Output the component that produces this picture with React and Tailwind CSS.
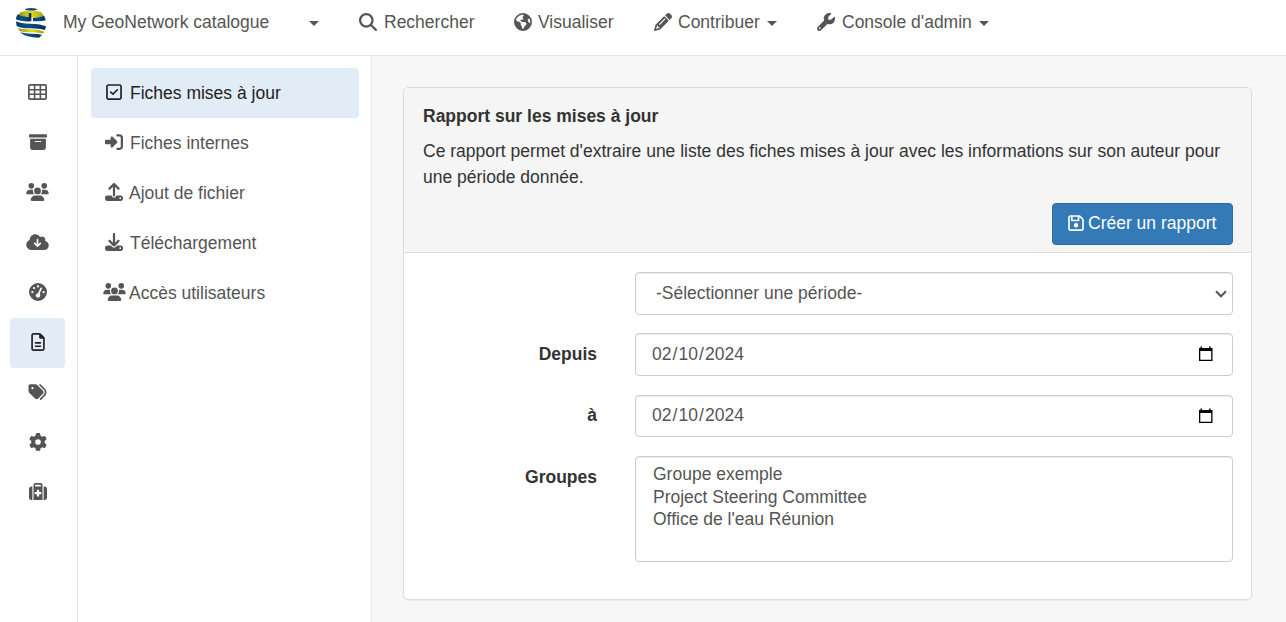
import React from "react";
import {
  FaMagnifyingGlass, FaEarthAmericas, FaPencil, FaWrench, FaBoxArchive, FaUsers,
  FaCloudArrowDown, FaGaugeHigh, FaRegFileLines, FaTags, FaGear, FaSuitcaseMedical,
  FaRegSquareCheck, FaRightToBracket, FaUpload, FaDownload, FaRegFloppyDisk,
} from "react-icons/fa6";

function Logo() {
  return (
    <svg className="h-[32px] w-[32px]" viewBox="3 3 96 96">
      <defs>
        <linearGradient id="navy" x1="0" x2="1">
          <stop offset="0" stopColor="#0a3566" />
          <stop offset="0.4" stopColor="#0b5288" />
          <stop offset="1" stopColor="#0a2c58" />
        </linearGradient>
        <linearGradient id="gold" x1="0" x2="1">
          <stop offset="0" stopColor="#8f951c" />
          <stop offset="0.5" stopColor="#e6dc1e" />
          <stop offset="1" stopColor="#a3a11b" />
        </linearGradient>
      </defs>
      <ellipse cx="51" cy="10" rx="18" ry="4" fill="url(#navy)" />
      <path d="M21 18Q50 11 81 18l9 12Q76 35 58 35H44Q26 34 13 26z" fill="url(#gold)" />
      <path d="M11 25Q24 33 44 34V21h8V46Q22 48 6 40Q7 31 11 25z" fill="url(#navy)" />
      <path d="M57 36Q76 35 90 29q4 6 5 14-14 4-38 2z" fill="url(#navy)" />
      <path d="M6 46Q20 53 48 53q34 1 48 8l-3 11Q76 67 48 67 20 67 8 60z" fill="url(#navy)" />
      <path d="M12 67Q28 70 50 70q28 0 41 8l-5 5Q70 79 50 79 26 79 17 75z" fill="url(#gold)" />
      <path d="M18 79Q32 83 52 83q22 0 32 4l-9 8Q36 95 18 79z" fill="url(#navy)" />
    </svg>
  );
}

function TableIcon({ className }) {
  return (
    <svg className={className} viewBox="0 0 19 16" fill="currentColor">
      <path
        fillRule="evenodd"
        d="M2 0h15a2 2 0 0 1 2 2v12a2 2 0 0 1-2 2H2a2 2 0 0 1-2-2V2a2 2 0 0 1 2-2z
          M1.700 1.700v3.200h4.100V1.700z M7.400 1.700v3.200h4.200V1.700z M13.200 1.700v3.200h4.100V1.700z
          M1.700 6.400v3.200h4.100V6.400z M7.400 6.400v3.200h4.200V6.400z M13.200 6.400v3.200h4.100V6.400z
          M1.700 11.100v3.200h4.100v-3.200z M7.400 11.100v3.200h4.200v-3.200z M13.200 11.100v3.200h4.100v-3.200z"
      />
    </svg>
  );
}

function Caret({ className = "" }) {
  return <span className={`mt-[3px] h-0 w-0 border-x-[5px] border-t-[5px] border-x-transparent border-t-[#555] ${className}`} />;
}

const railIcons = [
  [TableIcon, "h-[16px] w-[19px]"],
  [FaBoxArchive, "size-[18px]"],
  [FaUsers, "h-[18px] w-[23px]"],
  [FaCloudArrowDown, "h-[18px] w-[23px]"],
  [FaGaugeHigh, "size-[18px]"],
  [FaRegFileLines, "size-[18px]"],
  [FaTags, "h-[18px] w-[19px]"],
  [FaGear, "size-[18px]"],
  [FaSuitcaseMedical, "size-[18px]"],
];

const reports = [
  [FaRegSquareCheck, "Fiches mises à jour", "h-[18px] w-[16px] ml-[15px] mr-[8px]"],
  [FaRightToBracket, "Fiches internes", "size-[18px] ml-[14px] mr-[7px]"],
  [FaUpload, "Ajout de fichier", "size-[18px] ml-[14px] mr-[6px]"],
  [FaDownload, "Téléchargement", "size-[18px] ml-[14px] mr-[7px]"],
  [FaUsers, "Accès utilisateurs", "h-[18px] w-[23px] ml-[12px] mr-[3px]"],
];

const field = "rounded border border-[#ccc] bg-white text-[#555] shadow-[inset_0_1px_1px_rgba(0,0,0,0.075)]";

function DateField({ value, className }) {
  return (
    <div className={`flex items-center justify-between pl-[16px] pr-[19px] ${field} ${className}`}>
      <span className="flex pb-[2px]">
        {value.map((part, i) => (
          <React.Fragment key={i}>
            {i > 0 && <span className="w-[7px] text-center">/</span>}
            <span>{part}</span>
          </React.Fragment>
        ))}
      </span>
      <svg className="-mt-px h-[16px] w-[15px]" viewBox="0 0 15 16">
        <path d="M2.500 0.500H4V2h7V0.500h1.500V2H14.500V15H1V2h1.500zM2.300 5v8.700h10.900V5z" fill="#000" fillRule="evenodd" />
      </svg>
    </div>
  );
}

function Label({ children, className = "" }) {
  return <div className={`w-[193px] text-right font-bold text-[#333] ${className}`}>{children}</div>;
}

export default function App() {
  return (
    <div className="flex h-[622px] w-[1286px] flex-col overflow-hidden bg-white font-['Liberation_Sans',Arial,sans-serif] text-[17.5px] leading-[26px] text-[#555]">
      <header className="flex h-[56px] shrink-0 items-start border-b border-[#e7e7e7] pl-[15px] pt-[7px]">
        <Logo />
        <nav className="flex h-[29px] items-center whitespace-nowrap">
          <span className="ml-[16px] w-[246px]">My GeoNetwork catalogue</span>
          <Caret />
          <span className="ml-[40px] flex w-[155px] items-center gap-[7px]"><FaMagnifyingGlass className="size-[18px]" />Rechercher</span>
          <span className="flex w-[140px] items-center gap-[6px]"><FaEarthAmericas className="size-[18px]" />Visualiser</span>
          <span className="flex w-[163px] items-center gap-[6px]"><FaPencil className="size-[18px]" />Contribuer<Caret className="ml-px" /></span>
          <span className="flex items-center gap-[7px]"><FaWrench className="size-[18px]" />Console d'admin<Caret /></span>
        </nav>
      </header>
      <div className="flex min-h-0 flex-1">
        <aside className="w-[78px] shrink-0 border-r border-[#e7e7e7] pl-[10px] pt-[12px]">
          {railIcons.map(([Icon, size], i) => (
            <div key={i} className={`flex h-[50px] w-[55px] items-center justify-center rounded-[4px] pb-[2px] ${i === 5 ? "bg-[#e2ecf7] text-[#222]" : ""}`}>
              <Icon className={size} />
            </div>
          ))}
        </aside>
        <aside className="w-[294px] shrink-0 border-r border-[#e7e7e7] pl-[13px] pt-[12px]">
          {reports.map(([Icon, text, size], i) => (
            <div key={text} className={`flex h-[50px] w-[268px] items-center rounded-[4px] ${i === 0 ? "bg-[#e2ecf7] text-[#222]" : ""}`}>
              <Icon className={`mb-[2px] shrink-0 ${size}`} />
              <span>{text}</span>
            </div>
          ))}
        </aside>
        <main className="flex-1 bg-[#f7f7f7] pl-[31px] pt-[31px]">
          <section className="h-[513px] w-[849px] overflow-hidden rounded-[5px] border border-[#ddd] bg-white shadow-[0_1px_1px_rgba(0,0,0,0.05)]">
            <div className="flex h-[165px] flex-col border-b border-[#ddd] bg-[#f5f5f5] pl-[19px] pr-[18px] pt-[15px] text-[#333]">
              <h2 className="font-bold">Rapport sur les mises à jour</h2>
              <p className="mt-[9px] whitespace-nowrap">
                Ce rapport permet d'extraire une liste des fiches mises à jour avec les informations sur son auteur pour<br />
                une période donnée.
              </p>
              <button className="mt-[13px] flex h-[42px] w-[181px] items-center gap-[4px] self-end whitespace-nowrap rounded-[4px] border border-[#2e6da4] bg-[#337ab7] pb-[2px] pl-[15px] text-white">
                <FaRegFloppyDisk className="mb-px h-[18px] w-[16px]" /><span>Créer un rapport</span>
              </button>
            </div>
            <div className="pt-[19px]">
              <div className={`ml-[231px] flex h-[43px] w-[598px] items-center justify-between pl-[20px] pr-[5px] ${field}`}>
                <span className="pb-[2px]">-Sélectionner une période-</span>
                <svg className="h-[8px] w-[12px]" viewBox="0 0 12 8"><path d="M1 1.300 6 6.300 11 1.300" fill="none" stroke="#555" strokeWidth="2" /></svg>
              </div>
              <div className="mt-[18px] flex items-center gap-[38px]">
                <Label className="pb-[2px]">Depuis</Label>
                <DateField value={["02", "10", "2024"]} className="h-[43px] w-[598px]" />
              </div>
              <div className="mt-[19px] flex items-center gap-[38px]">
                <Label className="pb-[2px]">à</Label>
                <DateField value={["02", "10", "2024"]} className="h-[42px] w-[598px]" />
              </div>
              <div className="mt-[19px] flex gap-[38px]">
                <Label className="pt-[8px]">Groupes</Label>
                <div className={`h-[106px] w-[598px] pl-[17px] pt-[6px] leading-[22.500px] ${field}`}>
                  <div>Groupe exemple</div>
                  <div>Project Steering Committee</div>
                  <div>Office de l'eau Réunion</div>
                </div>
              </div>
            </div>
          </section>
        </main>
      </div>
    </div>
  );
}
